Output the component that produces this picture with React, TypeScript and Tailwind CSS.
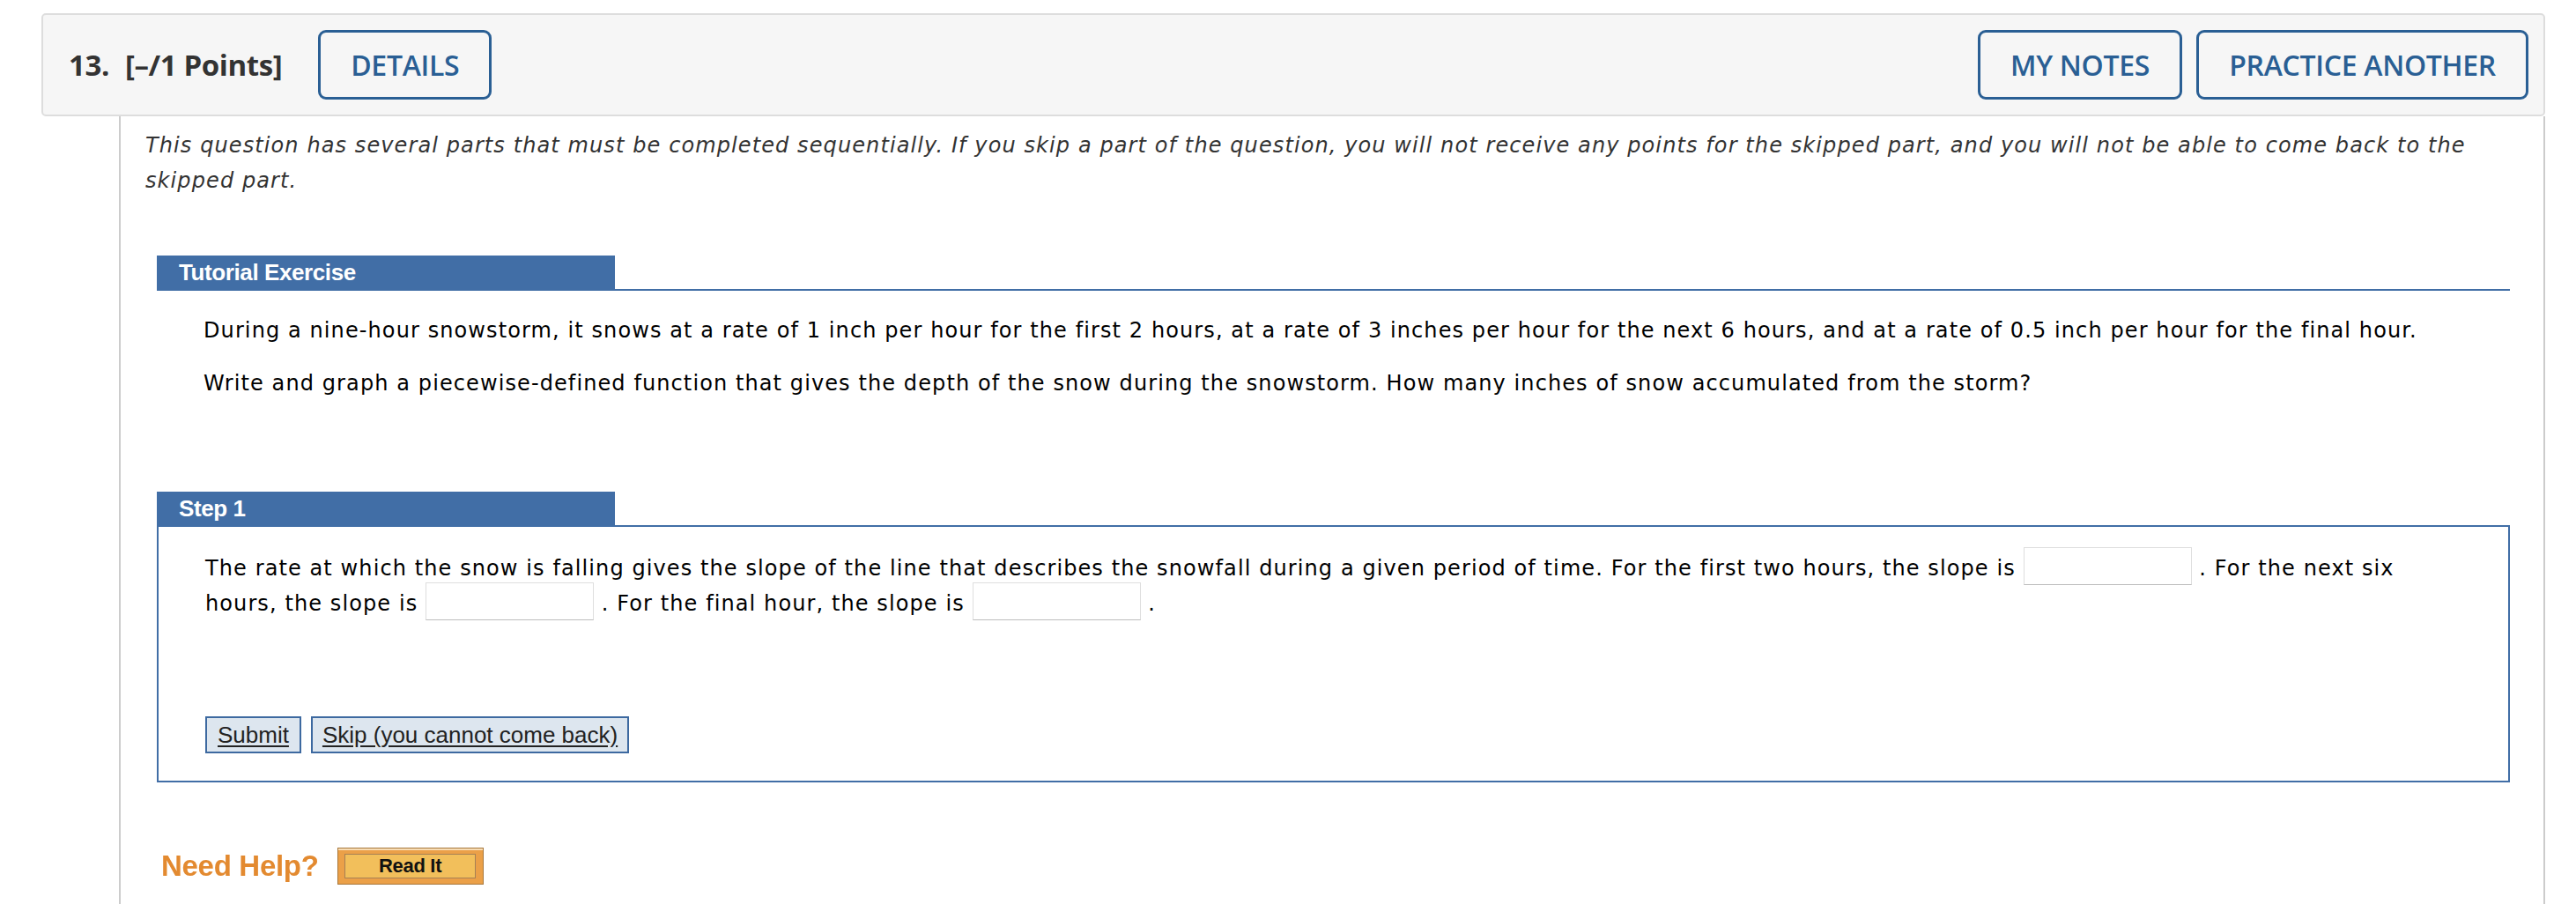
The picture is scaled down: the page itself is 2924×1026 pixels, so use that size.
import { useState } from "react";

const sans = "font-['DejaVu_Sans',Verdana,sans-serif] tracking-[1.1px]";
const arial = "font-['Liberation_Sans',Arial,sans-serif]";
const open = "font-['Open_Sans','Liberation_Sans',sans-serif]";

const OutlineButton = ({ label }: { label: string }) => (
  <button
    className={`${open} h-[79px] px-[34px] rounded-[9px] border-[3px] border-[#2a5f94] text-[#2a5f94] text-[32px] font-semibold tracking-[-0.3px] bg-[#f6f6f6]`}
  >
    {label}
  </button>
);

const SlopeInput = () => {
  const [value, setValue] = useState<string>("");
  return (
    <input
      type="text"
      value={value}
      onChange={(e) => setValue(e.target.value)}
      className="inline-block w-[191px] h-[43px] -my-[5px] align-[3px] bg-white border border-[#dedede] border-b-[#bdbdbd] outline-none"
    />
  );
};

const BarHeading = ({ title }: { title: string }) => (
  <div
    className={`${arial} w-[520px] h-[38px] bg-[#416ea6] text-white font-bold text-[26px] leading-[38px] pl-[25px] tracking-[-0.4px]`}
  >
    {title}
  </div>
);

export default function App() {
  return (
    <div className="w-[2924px] h-[1026px] bg-white overflow-hidden flex flex-col pt-[15px] pl-[47px] pr-[35px]">
      {/* question header */}
      <div className="h-[117px] shrink-0 flex items-center justify-between bg-[#f6f6f6] border-2 border-[#dddddd] rounded-[5px] pl-[29px] pr-[17px]">
        <div className={`${open} flex items-center text-[#333] font-bold text-[33px] tracking-[-0.4px]`}>
          <span>13.</span>
          <span className="ml-[18px]">[–/1 Points]</span>
          <div className="ml-[41px]">
            <OutlineButton label="DETAILS" />
          </div>
        </div>
        <div className="flex items-center gap-[16px]">
          <OutlineButton label="MY NOTES" />
          <OutlineButton label="PRACTICE ANOTHER" />
        </div>
      </div>

      {/* question body */}
      <div className="flex-1 ml-[88px] border-l-2 border-r-2 border-[#cccccc] pt-[13px] px-[28px]">
        <p className={`${sans} italic text-[24px] leading-[40px] text-[#333]`}>
          This question has several parts that must be completed sequentially. If you skip a part of the question, you
          will not receive any points for the skipped part, and you will not be able to come back to the skipped part.
        </p>

        <div className="mt-[65px] ml-[13px] mr-[10px]">
          <div className="border-b-2 border-[#416ea6]">
            <BarHeading title="Tutorial Exercise" />
          </div>
          <div className={`${sans} pl-[53px] pt-[25px] text-[24px] leading-[40px] text-black`}>
            <p>
              During a nine-hour snowstorm, it snows at a rate of 1 inch per hour for the first 2 hours, at a rate of 3
              inches per hour for the next 6 hours, and at a rate of 0.5 inch per hour for the final hour.
            </p>
            <p className="mt-[20px]">
              Write and graph a piecewise-defined function that gives the depth of the snow during the snowstorm. How
              many inches of snow accumulated from the storm?
            </p>
          </div>

          <div className="mt-[103px]">
            <BarHeading title="Step 1" />
            <div className="border-2 border-[#416ea6] pl-[53px] pr-[40px] pt-[27px] pb-[31px]">
              <p className={`${sans} text-[24px] leading-[40px] text-black`}>
                The rate at which the snow is falling gives the slope of the line that describes the snowfall during a
                given period of time. For the first two hours, the slope is <SlopeInput /> . For the next six hours,
                the slope is <SlopeInput /> . For the final hour, the slope is <SlopeInput /> .
              </p>
              <div className={`${arial} mt-[108px] flex gap-[11px] text-[26px] text-[#222]`}>
                <button className="h-[42px] px-[12px] bg-[#dde6ef] border-2 border-[#3d69a0] underline underline-offset-[3px] leading-none">
                  Submit
                </button>
                <button className="h-[42px] px-[11px] bg-[#dde6ef] border-2 border-[#3d69a0] underline underline-offset-[3px] leading-none">
                  Skip (you cannot come back)
                </button>
              </div>
            </div>
          </div>
        </div>

        {/* help */}
        <div className="mt-[70px] ml-[18px] flex items-center">
          <span className={`${arial} text-[33px] font-bold text-[#e38a30] tracking-[-0.3px] blur-[0.6px]`}>
            Need Help?
          </span>
          <button className="ml-[21px] w-[166px] h-[42px] flex items-center justify-center bg-[#eba048] border border-[#a8773a] shadow-[inset_0_2px_0_#f7dcb5]">
            <span
              className={`${arial} w-[149px] h-[28px] flex items-center justify-center bg-[#f2bf5b] border border-[#a68055] text-[22px] font-bold text-[#111] tracking-[-0.3px]`}
            >
              Read It
            </span>
          </button>
        </div>
      </div>
    </div>
  );
}
